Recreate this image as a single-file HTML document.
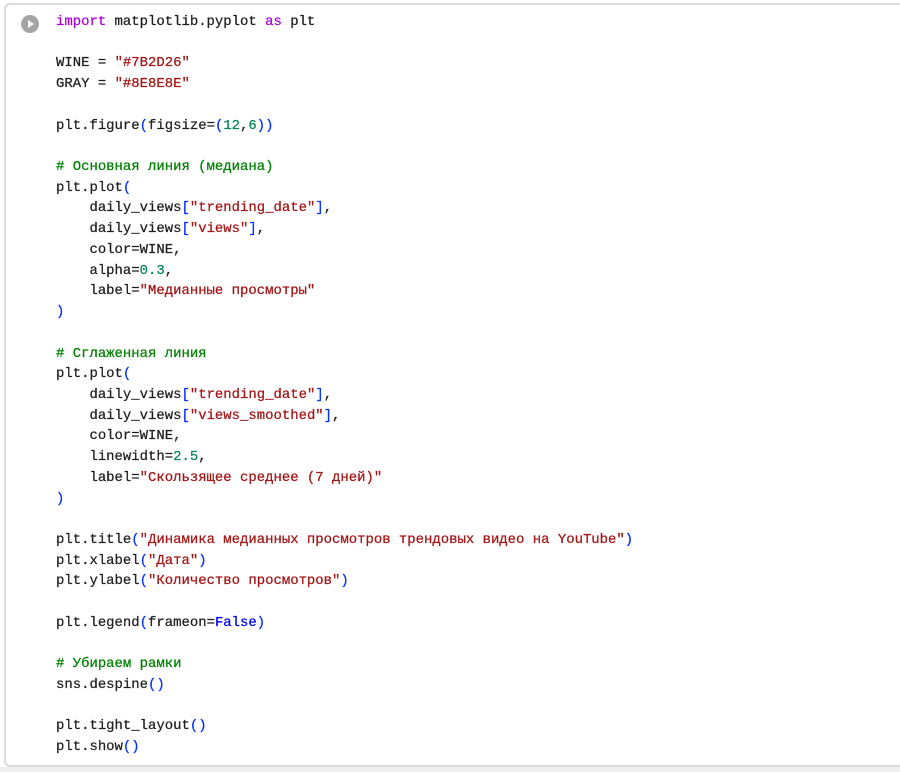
<!DOCTYPE html>
<html><head><meta charset="utf-8"><style>
html,body{margin:0;padding:0;background:#fff;width:900px;height:772px;overflow:hidden}
.cell{position:absolute;left:4px;top:3px;width:910px;height:764px;border:2px solid #dadada;border-right:none;border-radius:6px 0 0 6px;box-sizing:border-box}
.bot{position:absolute;left:0;top:767px;width:900px;height:5px;background:#efefef}
.play{position:absolute;left:21px;top:15px;width:18px;height:18px;border-radius:50%;background:#a5a5a5}
.play:after{content:"";position:absolute;left:7px;top:5px;border-left:6px solid #fff;border-top:4px solid transparent;border-bottom:4px solid transparent}
pre{position:absolute;left:56px;top:12px;margin:0;font-family:"Liberation Mono",monospace;font-size:13.95px;line-height:20.72px;color:#1f1f1f;-webkit-text-stroke:0.25px currentColor}
.k{color:#af00db}.s{color:#a31515}.c{color:#008000}.n{color:#098658}.p{color:#0431fa}.b{color:#0000ff}
</style></head><body>
<div class="cell"></div><div class="bot"></div><div class="play"></div>
<pre><span class="k">import</span> matplotlib.pyplot <span class="k">as</span> plt

WINE = <span class="s">"#7B2D26"</span>
GRAY = <span class="s">"#8E8E8E"</span>

plt.figure<span class="p">(</span>figsize=<span class="p">(</span><span class="n">12</span>,<span class="n">6</span><span class="p">))</span>

<span class="c"># Основная линия (медиана)</span>
plt.plot<span class="p">(</span>
    daily_views<span class="p">[</span><span class="s">"trending_date"</span><span class="p">]</span>,
    daily_views<span class="p">[</span><span class="s">"views"</span><span class="p">]</span>,
    color=WINE,
    alpha=<span class="n">0.3</span>,
    label=<span class="s">"Медианные просмотры"</span>
<span class="p">)</span>

<span class="c"># Сглаженная линия</span>
plt.plot<span class="p">(</span>
    daily_views<span class="p">[</span><span class="s">"trending_date"</span><span class="p">]</span>,
    daily_views<span class="p">[</span><span class="s">"views_smoothed"</span><span class="p">]</span>,
    color=WINE,
    linewidth=<span class="n">2.5</span>,
    label=<span class="s">"Скользящее среднее (7 дней)"</span>
<span class="p">)</span>

plt.title<span class="p">(</span><span class="s">"Динамика медианных просмотров трендовых видео на YouTube"</span><span class="p">)</span>
plt.xlabel<span class="p">(</span><span class="s">"Дата"</span><span class="p">)</span>
plt.ylabel<span class="p">(</span><span class="s">"Количество просмотров"</span><span class="p">)</span>

plt.legend<span class="p">(</span>frameon=<span class="b">False</span><span class="p">)</span>

<span class="c"># Убираем рамки</span>
sns.despine<span class="p">()</span>

plt.tight_layout<span class="p">()</span>
plt.show<span class="p">()</span></pre>
</body></html>
